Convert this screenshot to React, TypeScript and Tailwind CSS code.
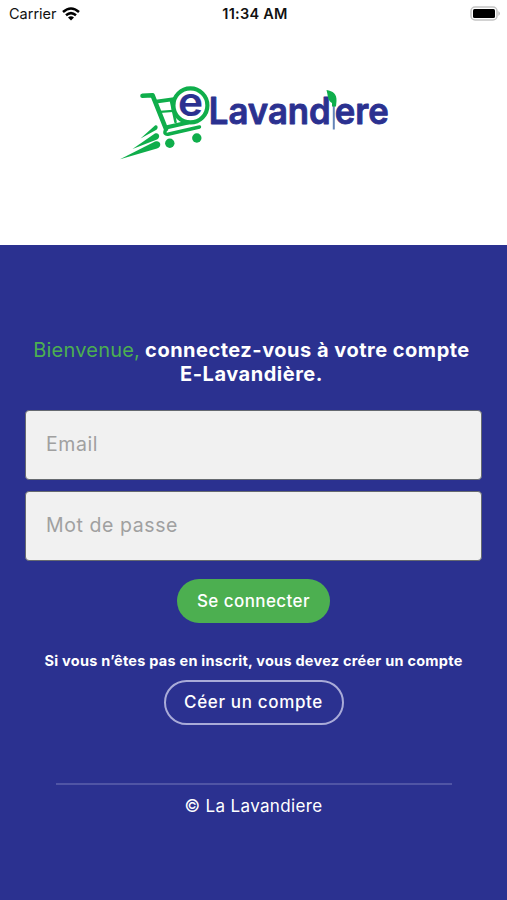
import React from "react";

const Wordmark: React.FC = () => (
  <svg viewBox="116 62 276 100" className="h-[100px] w-[276px]" role="img" aria-label="eLavandiere">
    <g fill="none" stroke="#0fae4b" strokeLinecap="round" strokeLinejoin="round">
      <path d="M142.5 95.8 L152.5 95.2 L166 129" strokeWidth="4.6" />
      <path d="M156 101.6 L174 99.2" strokeWidth="3.8" />
      <path d="M160 111.8 L173 110.8" strokeWidth="2.2" />
      <path d="M171 101 L175.5 122" strokeWidth="2.6" />
      <path d="M166 127.5 L188 122.5" strokeWidth="4" />
      <path d="M166 129 C163.5 133.5 165.5 135 169 134 L199.5 127" strokeWidth="3.4" />
      <circle cx="190.4" cy="105.4" r="17" strokeWidth="4.2" />
    </g>
    <g fill="#0fae4b">
      <circle cx="169.8" cy="143.3" r="4.7" />
      <circle cx="196.8" cy="138" r="4.7" />
      <path d="M120 159.3 L155 141.6 C160.5 139.6 162.5 146.6 157 148.6 Z" />
      <path d="M132.5 149 L154.5 133.8 C159 131.6 161 137.6 157 139.4 Z" />
      <path d="M140.5 138.5 L155 125.4 C158 124.2 158.6 128.6 156 130 Z" />
    </g>
    <g fill="#2b3190" stroke="#2b3190" strokeLinejoin="round" fontFamily="Inter, sans-serif" fontWeight="600">
      <text x="178" y="116.2" fontSize="40" strokeWidth="0.2" textLength="25" lengthAdjust="spacingAndGlyphs">e</text>
      <text x="208.8" y="123.6" fontSize="36.8" strokeWidth="0.9" textLength="122" lengthAdjust="spacingAndGlyphs">Lavand</text>
      <text x="334.8" y="123.6" fontSize="36.8" strokeWidth="0.9" textLength="54" lengthAdjust="spacingAndGlyphs">ere</text>
    </g>
    <path d="M333.8 103 V129.5" stroke="#6484b8" strokeWidth="2" fill="none" />
    <path d="M326.5 90 C333 91 337 94 336.5 101 L336 106.5 H332 V103 C327.5 101 328 95 326.5 90 Z" fill="#0fae4b" />
  </svg>
);

const StatusBar: React.FC = () => (
  <div className="grid h-7 grid-cols-3 items-center pl-[9px] pr-[6px] text-[14.5px] text-[#111]">
    <div className="flex items-center gap-[5px]">
      <span>Carrier</span>
      <svg viewBox="0 0 18 14" className="h-3.5 w-[18px]" fill="none" stroke="#000" strokeWidth="2.5" aria-hidden>
        <path d="M1 5 Q9 -2 17 5" />
        <path d="M4 8.3 Q9 4 14 8.3" />
        <path d="M9 13.5 L6 10.5 Q9 8.2 12 10.5 Z" fill="#000" stroke="none" />
      </svg>
    </div>
    <span className="text-center font-semibold tracking-[0.25px]">11:34 AM</span>
    <svg viewBox="0 0 31 15" className="mb-0.5 h-[15px] w-[31px] justify-self-end" aria-hidden>
      <rect x="1" y="1" width="26" height="13" rx="4" fill="#fff" stroke="#c4c4c4" strokeWidth="1.5" />
      <rect x="3" y="3" width="22" height="9" rx="1.5" fill="#000" />
      <path d="M28.5 5 Q31 7.5 28.5 10 Z" fill="#aaa" />
    </svg>
  </div>
);

type FieldProps = {
  label: string;
  type: string;
};

const Field: React.FC<FieldProps> = ({ label, type }) => (
  <input
    type={type}
    placeholder={label}
    className="h-[70px] w-full rounded-[4px] border border-[#666a70] bg-[#f1f1f1] px-5 pb-0.5 text-[19.5px] tracking-[0.58px] text-gray-800 placeholder:text-[#a0a0a0]"
  />
);

export default function App() {
  return (
    <div className="flex h-[900px] w-full flex-col bg-white font-[Inter,sans-serif]">
      <header className="h-[245px] shrink-0">
        <StatusBar />
        <div className="flex pl-[116px] pt-[34px]">
          <Wordmark />
        </div>
      </header>
      <main className="flex flex-1 flex-col items-center bg-[#2b3190] px-[25px] pt-[93px] text-white">
        <h1 className="flex flex-col items-center whitespace-nowrap pr-[4px] text-[20px] font-bold leading-6">
          <span className="flex gap-[5px]">
            <span className="font-normal tracking-[0.22px] text-[#4caf50]">Bienvenue,</span>
            <span className="tracking-[0.5px]">connectez-vous à votre compte</span>
          </span>
          <span className="tracking-[0.53px]">E-Lavandière.</span>
        </h1>
        <form className="mt-6 flex w-full flex-col items-center gap-[11px]" onSubmit={(e) => e.preventDefault()}>
          <Field label="Email" type="email" />
          <Field label="Mot de passe" type="password" />
          <button className="mt-[7px] h-11 w-[153px] rounded-full bg-[#4caf50] pt-px text-[17px] font-medium tracking-[0.42px]">
            Se connecter
          </button>
        </form>
        <p className="mt-7 whitespace-nowrap text-[14.5px] font-bold leading-5 tracking-[0.25px]">
          Si vous n’êtes pas en inscrit, vous devez créer un compte
        </p>
        <button className="mt-[9px] h-[45px] w-[180px] rounded-full border-2 border-[#a9abd8] text-[17px] font-medium tracking-[0.65px]">
          Céer un compte
        </button>
        <footer className="mt-[58px] w-[396px] border-t-2 border-[#5055a5] pt-[9px] text-center text-[17px] leading-6 tracking-[0.35px]">
          © La Lavandiere
        </footer>
      </main>
    </div>
  );
}
